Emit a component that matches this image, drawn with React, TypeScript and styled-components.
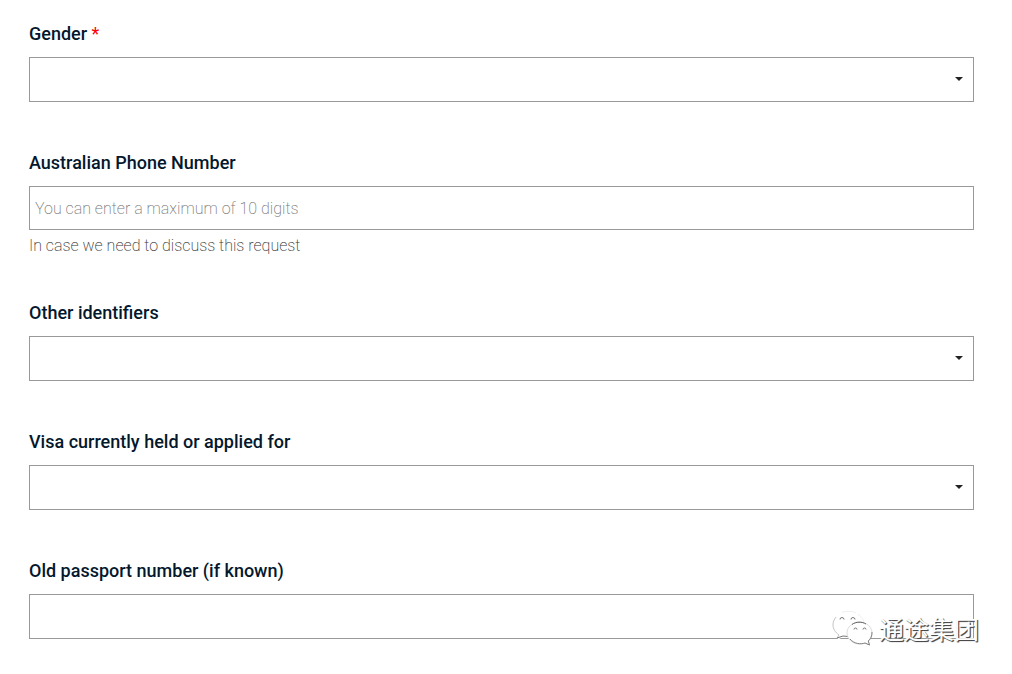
import React from "react";
import styled, { createGlobalStyle, css } from "styled-components";

const GlobalStyle = createGlobalStyle`
  *, *::before, *::after { box-sizing: border-box; }
  body {
    margin: 0;
    background: #fff;
    color: #04182d;
    font-family: Roboto, "Liberation Sans", sans-serif;
  }
`;

const Form = styled.form`
  display: flex;
  flex-direction: column;
  gap: 49px;
  padding: 22px 38px 36px 29px;
`;

const Field = styled.div`
  display: flex;
  flex-direction: column;
`;

const Label = styled.label`
  margin-bottom: 11px;
  font-size: 18px;
  font-weight: 500;
  line-height: 24px;
`;

const Required = styled.span`
  color: #f00;
  font-weight: 400;
`;

const ControlWrap = styled.div`
  position: relative;
  display: flex;
`;

const control = css`
  flex: 1;
  min-width: 0;
  margin: 0;
  border: 1px solid #999;
  border-radius: 0;
  background: #fff;
  color: #04182d;
  font-family: inherit;
  font-size: 16px;
  font-weight: 200;
`;

const Select = styled.select`
  ${control}
  height: 45px;
  padding: 0 28px 0 6px;
  appearance: none;
`;

const TextInput = styled.input<{ $height: number }>`
  ${control}
  height: ${(p) => p.$height}px;
  padding: 0 5px;
  &::placeholder {
    color: #777;
    opacity: 1;
  }
`;

const Caret = styled.svg`
  position: absolute;
  right: 11px;
  top: 20px;
  width: 8px;
  height: 4px;
  fill: #222;
  pointer-events: none;
`;

const Help = styled.p`
  margin: 10px 0 0;
  color: #333;
  font-size: 16px;
  font-weight: 200;
  line-height: 12px;
`;

const Watermark = styled.div`
  position: absolute;
  right: -5px;
  bottom: -7px;
  display: flex;
  align-items: center;
  gap: 6px;
  pointer-events: none;
`;

const WatermarkText = styled.span`
  color: #fff;
  font-family: "Noto Sans CJK SC", sans-serif;
  font-size: 25px;
  line-height: 36px;
  text-shadow: 1px 1px 1px #444, 1px 1px 0 #777;
`;

const ChatIcon = styled.svg`
  width: 41px;
  height: 36px;
`;

function SelectField({ id, label, required }: { id: string; label: string; required?: boolean }) {
  return (
    <Field>
      <Label htmlFor={id}>
        {label}
        {required && <Required> *</Required>}
      </Label>
      <ControlWrap>
        <Select id={id} required={required} defaultValue="">
          <option value="" />
        </Select>
        <Caret viewBox="0 0 8 4" aria-hidden="true">
          <path d="M0 0h8L4 4z" />
        </Caret>
      </ControlWrap>
    </Field>
  );
}

const BACK = "M17 1C8 1 1 7 1 14.500C1 19 3.500 22.500 7 25L5 30L11 27C13 27.600 15 28 17 28C26 28 33 22 33 14.500C33 7 26 1 17 1Z";
const FRONT = "M27.500 12C20.500 12 15 17 15 23C15 29 20.500 34 27.500 34C29.500 34 31.500 33.500 33 33L37.500 35L36.300 31C38.700 29 40 26 40 23C40 17 34.500 12 27.500 12Z";

function ChatBubbles() {
  return (
    <ChatIcon viewBox="0 0 41 36" fill="none" aria-hidden="true">
      <path d={BACK} fill="#fff" />
      <path d="M4 7C2 9.500 1 12 1 15C1 19 3.500 22.500 7 25L5 28" stroke="#aaa" strokeWidth="0.7" />
      <path d="M5 28L11 26L16 26.500" stroke="#666" strokeWidth="0.9" />
      <path d="M10 2.500C14 0.800 20 0.800 24 3M26 4C29 6 31 9 32 12" stroke="#e4e4e4" strokeWidth="0.6" />
      <path d="M8 9.500a2 2 0 0 1 4 0M19 9.500a2 2 0 0 1 4 0" stroke="#777" />
      <path d={FRONT} fill="#fff" stroke="#ccc" strokeWidth="0.7" />
      <path d="M20 14.500C24 11.500 30 11.500 34 14" stroke="#555" strokeWidth="0.9" />
      <path d="M18 29C22 34 29 34.500 33 33L37.500 35L36.300 31C39 28.500 40 26 40 22" stroke="#777" strokeWidth="0.9" />
      <path d="M22 19.500a1.500 1.500 0 0 1 3 0M31 19.500a1.500 1.500 0 0 1 3 0" stroke="#777" />
    </ChatIcon>
  );
}

export default function App() {
  return (
    <>
      <GlobalStyle />
      <Form>
        <SelectField id="gender" label="Gender" required />
        <Field>
          <Label htmlFor="phone">Australian Phone Number</Label>
          <ControlWrap>
            <TextInput
              id="phone"
              type="tel"
              maxLength={10}
              placeholder="You can enter a maximum of 10 digits"
              aria-describedby="phone-help"
              $height={44}
            />
          </ControlWrap>
          <Help id="phone-help">In case we need to discuss this request</Help>
        </Field>
        <SelectField id="identifiers" label="Other identifiers" />
        <SelectField id="visa" label="Visa currently held or applied for" />
        <Field>
          <Label htmlFor="passport">Old passport number (if known)</Label>
          <ControlWrap>
            <TextInput id="passport" type="text" $height={45} />
            <Watermark>
              <ChatBubbles />
              <WatermarkText lang="zh-CN">通途集团</WatermarkText>
            </Watermark>
          </ControlWrap>
        </Field>
      </Form>
    </>
  );
}
